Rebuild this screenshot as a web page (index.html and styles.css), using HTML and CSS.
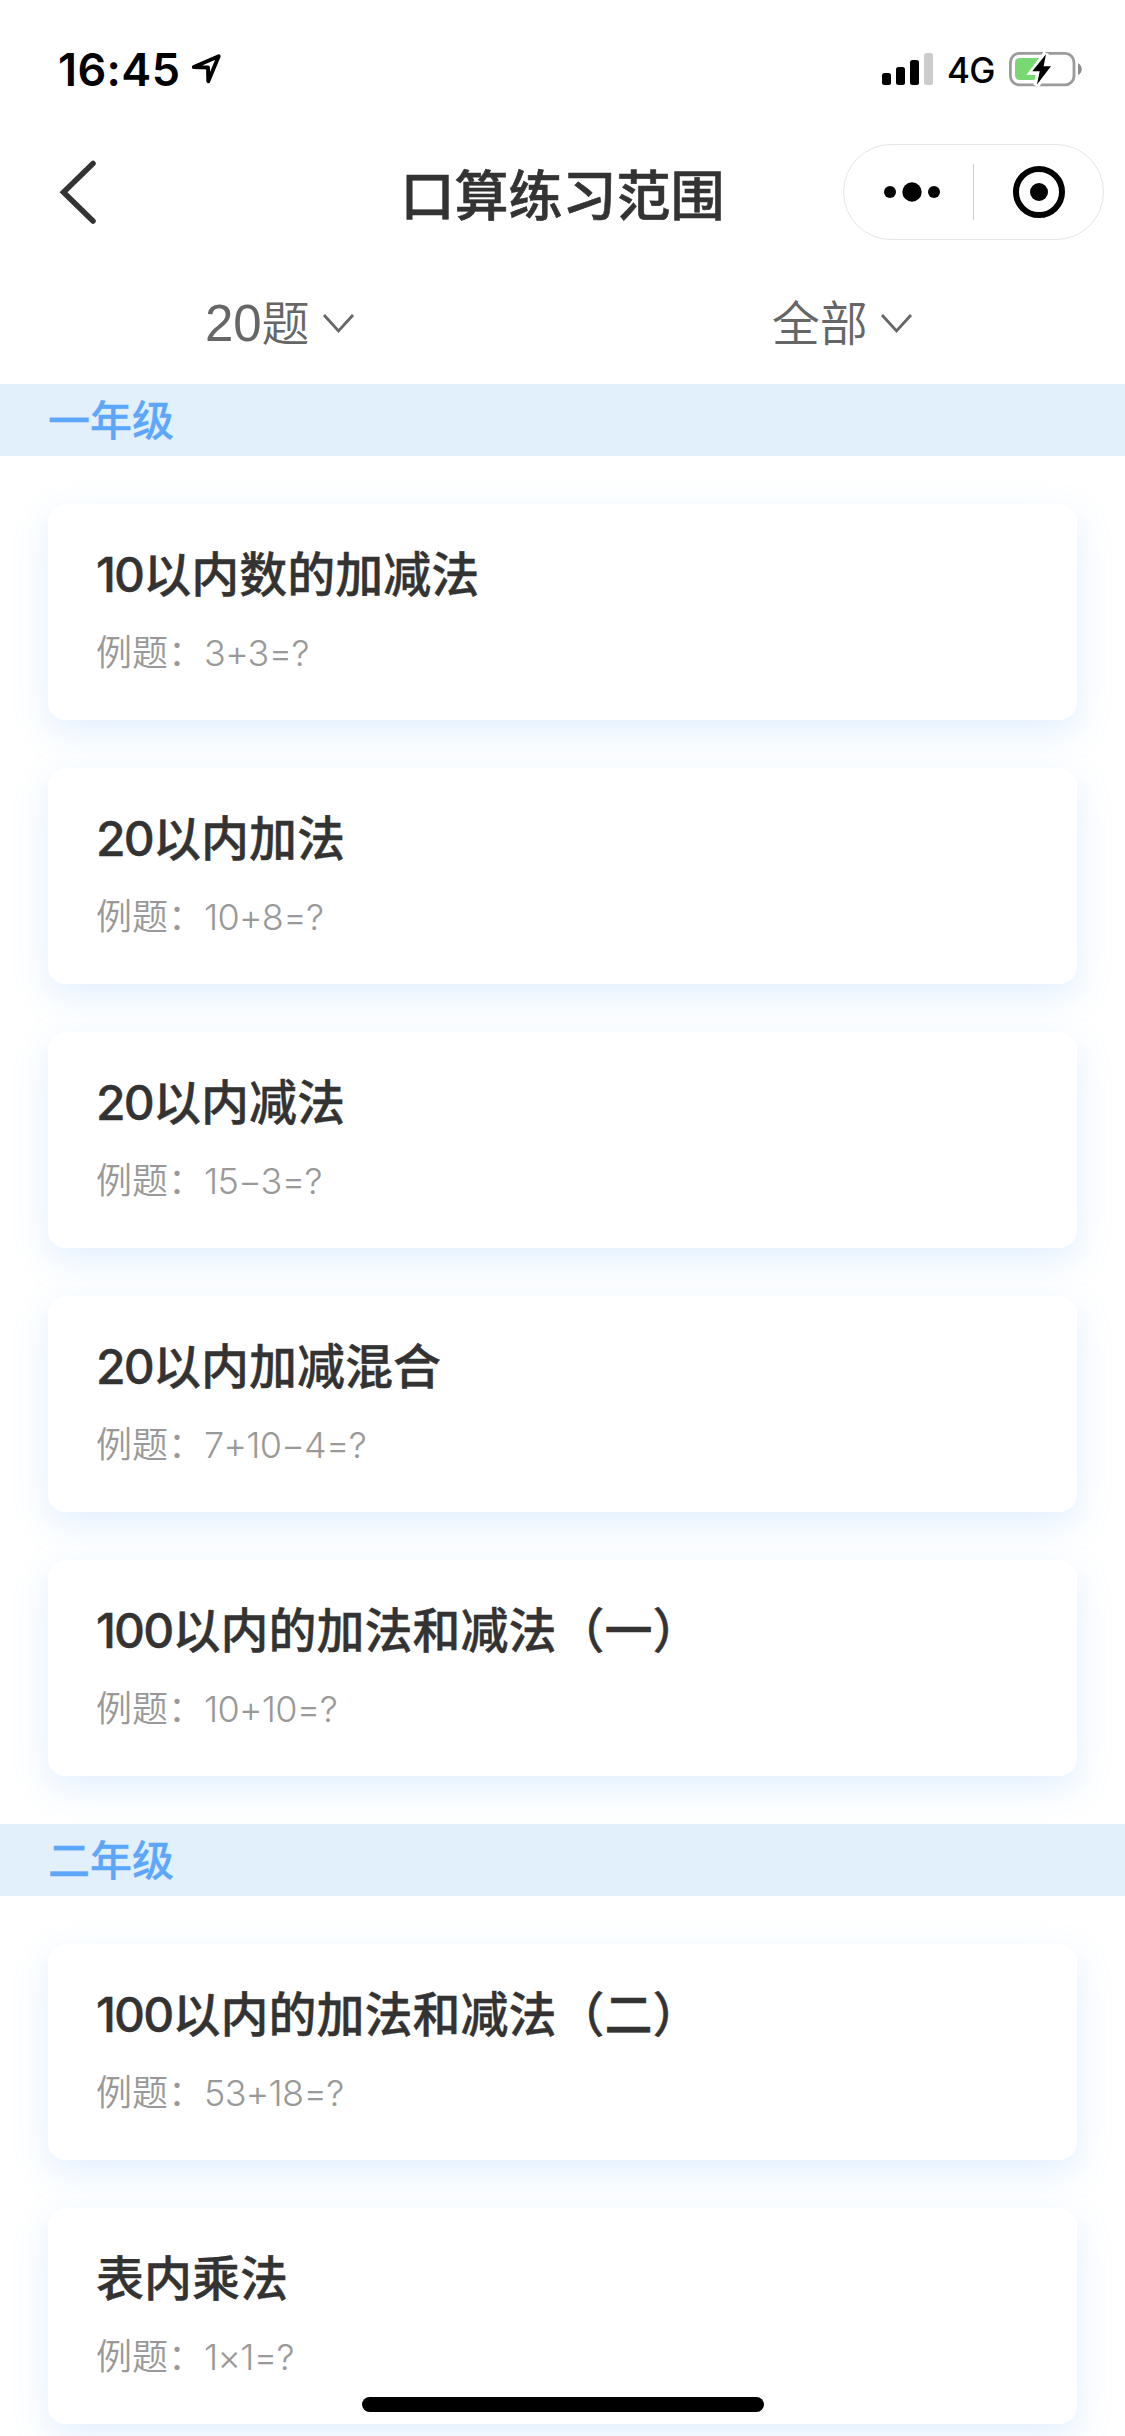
FILE: index.html
```html
<!DOCTYPE html>
<html lang="zh-CN">
<head>
<meta charset="utf-8">
<title>口算练习范围</title>
<link rel="stylesheet" href="styles.css">
</head>
<body>
<div class="screen">
  <header class="status">
    <div class="status-left">
      <span class="clock">16:45</span>
      <svg class="location" width="32" height="32" viewBox="0 0 32 32"><path d="M2.800 14 27.700 3.300 17.300 28.300 17 14.500Z" fill="none" stroke="#000" stroke-width="3.900" stroke-linejoin="round"/></svg>
    </div>
    <div class="status-right">
      <svg class="signal" width="51" height="34" viewBox="0 0 51 34"><rect x="0" y="21" width="9" height="12" rx="2.5"/><rect x="14" y="15" width="9" height="18" rx="2.5"/><rect x="28" y="8" width="9" height="25" rx="2.5"/><rect x="42" y="1" width="9" height="32" rx="2.5" fill="#ccc"/></svg>
      <span class="network">4G</span>
      <svg class="battery" width="74" height="36" viewBox="0 0 74 36">
        <rect x="1.4" y="2.3" width="63.6" height="31.6" rx="9" fill="none" stroke="#9b9b9b" stroke-width="2.8"/>
        <path d="M69 12.3c5 2.3 5 9.500 0 11.800z" fill="#8c8c8c"/>
        <rect x="6" y="7" width="28" height="22" rx="4.500" fill="#78d872"/>
        <path d="M37 2.500 23.300 21H30.200L27.300 34.500 42 15.500H35.200Z" fill="#fff" stroke="#fff" stroke-width="6"/>
        <path d="M37 3.300 23.300 20.300H30.700L28 33.500 42 15.300H34.600Z"/>
      </svg>
    </div>
  </header>
  <nav class="navbar">
    <svg class="back" width="40" height="68" viewBox="0 0 40 68"><path d="M35 5.500 5.500 34.200 35 63" fill="none" stroke="#333" stroke-width="5.500" stroke-linecap="round"/></svg>
    <h1 class="title">口算练习范围</h1>
    <div class="capsule">
      <svg width="58" height="22" viewBox="0 0 58 22"><circle cx="7" cy="11" r="6"/><circle cx="29" cy="11" r="9.700"/><circle cx="51" cy="11" r="6"/></svg>
      <i class="divider"></i>
      <svg width="54" height="54" viewBox="0 0 54 54"><circle cx="27" cy="27" r="23" fill="none" stroke="#000" stroke-width="6"/><circle cx="27" cy="27" r="9"/></svg>
    </div>
  </nav>
  <div class="filters">
    <div class="filter"><span><b class="count">20</b>题</span><svg width="34" height="22" viewBox="0 0 34 22"><path d="M2 3 16.500 19 31 3" fill="none" stroke="#666" stroke-width="2.800"/></svg></div>
    <div class="filter"><span>全部</span><svg width="34" height="22" viewBox="0 0 34 22"><path d="M2 3 16.500 19 31 3" fill="none" stroke="#666" stroke-width="2.800"/></svg></div>
  </div>
  <h2 class="grade">一年级</h2>
  <div class="cards">
    <section class="card"><h3><b>10</b>以内数的加减法</h3><p>例题：<span>3+3=?</span></p></section>
    <section class="card"><h3><b>20</b>以内加法</h3><p>例题：<span>10+8=?</span></p></section>
    <section class="card"><h3><b>20</b>以内减法</h3><p>例题：<span>15−3=?</span></p></section>
    <section class="card"><h3><b>20</b>以内加减混合</h3><p>例题：<span>7+10−4=?</span></p></section>
    <section class="card"><h3><b>100</b>以内的加法和减法（一）</h3><p>例题：<span>10+10=?</span></p></section>
  </div>
  <h2 class="grade">二年级</h2>
  <div class="cards">
    <section class="card"><h3><b>100</b>以内的加法和减法（二）</h3><p>例题：<span>53+18=?</span></p></section>
    <section class="card"><h3>表内乘法</h3><p>例题：<span>1×1=?</span></p></section>
  </div>
  <div class="home-indicator"></div>
</div>
</body>
</html>
```
FILE: styles.css
```css
* { box-sizing: border-box; margin: 0; padding: 0; }
body { background: #fff; }
.screen {
  position: relative;
  width: 1125px;
  height: 2436px;
  overflow: hidden;
  background: #fff;
  color: #333;
  font-family: "Noto Sans CJK SC", sans-serif;
}
svg { display: block; flex: none; }

.status {
  display: flex;
  justify-content: space-between;
  height: 132px;
  padding: 52px 42px 0 58px;
  color: #000;
  font-family: Inter, sans-serif;
}
.status-left, .status-right { display: flex; align-items: flex-start; height: 34px; }
.clock { width: 133px; font-size: 45px; line-height: 35px; font-weight: 600; letter-spacing: 0.4px; }
.location { margin-top: 1px; }
.network { width: 62px; margin-left: 13px; font-size: 35px; line-height: 37px; font-weight: 500; letter-spacing: -0.6px; }
.signal { margin-right: 1px; }
.battery { margin-top: -1px; }

.navbar {
  display: grid;
  grid-template-columns: 1fr auto 1fr;
  align-items: center;
  height: 120px;
  padding: 0 21px 0 58px;
}
.title {
  margin-right: 37px;
  padding-top: 2px;
  font-size: 54px;
  line-height: 80px;
  font-weight: 500;
  -webkit-text-stroke: 0.6px currentColor;
}
.capsule {
  display: flex;
  align-items: center;
  justify-self: end;
  width: 261px;
  height: 96px;
  padding: 0 37px 0 39px;
  border: 1px solid #e5e5e5;
  border-radius: 48px;
}
.divider { width: 1px; height: 56px; margin: 0 38px 0 32px; background: #ccc; }

.filters { display: flex; height: 132px; }
.filter {
  display: flex;
  flex: 1;
  align-items: center;
  justify-content: center;
  gap: 12px;
  padding: 7px 2px 0 0;
  color: #666;
  font-size: 48px;
  line-height: 70px;
  font-weight: 350;
}
.filter svg { margin-top: 3px; }
.filter span { margin-top: -4px; }
.count { font-family: "Liberation Sans", sans-serif; font-weight: 400; font-size: 51px; line-height: 1; }

.grade {
  height: 72px;
  padding-left: 48px;
  background: #e1f0fb;
  color: #5ca7fc;
  font-size: 42px;
  line-height: 68px;
  font-weight: 500;
  -webkit-text-stroke: 0.3px currentColor;
}
.cards { display: flex; flex-direction: column; gap: 48px; padding: 48px; }
.card {
  height: 216px;
  padding: 33px 48px;
  border-radius: 18px;
  background: #fff;
  box-shadow: 0 12px 36px rgba(90, 165, 250, 0.18);
}
.card h3 {
  font-size: 48px;
  line-height: 68px;
  font-weight: 500;
  -webkit-text-stroke: 0.4px currentColor;
}
.card h3 b { font-family: Inter, sans-serif; font-weight: 500; line-height: 1; letter-spacing: -1.8px; }
.card p { margin-top: 18px; color: #999; font-size: 36px; line-height: 54px; font-weight: 350; }
.card p span { font-family: Inter, sans-serif; font-weight: 300; line-height: 1; letter-spacing: -0.7px; }

.home-indicator {
  position: absolute;
  left: 362px;
  bottom: 24px;
  width: 402px;
  height: 15px;
  border-radius: 8px;
  background: #000;
}
```
